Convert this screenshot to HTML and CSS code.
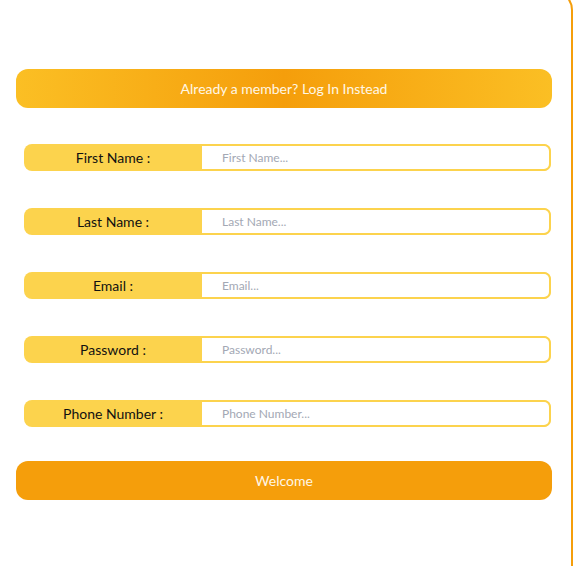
FILE: index.html
```html
<!DOCTYPE html>
<html>
<head>
<meta charset="utf-8">
<link rel="stylesheet" href="styles.css">
</head>
<body>
<div class="card">
  <button class="btn btn-login">Already a member? Log In Instead</button>
  <form class="form">
    <div class="row"><label class="label">First Name :</label><input class="input" placeholder="First Name..."></div>
    <div class="row"><label class="label">Last Name :</label><input class="input" placeholder="Last Name..."></div>
    <div class="row"><label class="label">Email :</label><input class="input" placeholder="Email..."></div>
    <div class="row"><label class="label">Password :</label><input class="input" placeholder="Password..."></div>
    <div class="row"><label class="label">Phone Number :</label><input class="input" placeholder="Phone Number..."></div>
  </form>
  <button class="btn btn-welcome">Welcome</button>
</div>
</body>
</html>
```
FILE: styles.css
```css
html { overflow: hidden; height: 566px; background: #fff; }
body { margin: 0; padding: 0; font-family: Lato, "Noto Sans", sans-serif; }
.card {
  box-sizing: border-box;
  margin: -10px 0 0 -20px;
  height: 640px;
  border: 2px solid #f59e0b;
  border-radius: 20px;
  padding: 77px 19px 0 34px;
  display: flex;
  flex-direction: column;
}
.btn {
  height: 39px;
  border: none;
  border-radius: 12px;
  color: #fff7e6;
  font-family: inherit;
  font-size: 14px;
  padding: 0;
  width: 100%;
  flex: none;
}
.btn-login {
  background: linear-gradient(90deg, #fbbf24 0%, #f59e0b 50%, #fbbf24 100%);
}
.btn-welcome { background: #f59e0b; margin-top: 34px; }
.form {
  display: flex;
  flex-direction: column;
  gap: 37px;
  margin: 36px 1px 0 8px;
}
.row {
  display: flex;
  height: 27px;
  background: #fcd34d;
  border-radius: 8px;
}
.label {
  width: 178px;
  flex: none;
  display: flex;
  align-items: center;
  justify-content: center;
  font-size: 14px;
  color: #111;
}
.input {
  flex: 1;
  min-width: 0;
  box-sizing: border-box;
  height: 27px;
  border: 2px solid #fcd34d;
  border-left: none;
  border-radius: 0 7px 7px 0;
  background: #fff;
  padding: 0 0 0 20px;
  font-family: inherit;
  font-size: 12px;
  outline: none;
}
.input::placeholder { color: #a3a8b4; }
```
